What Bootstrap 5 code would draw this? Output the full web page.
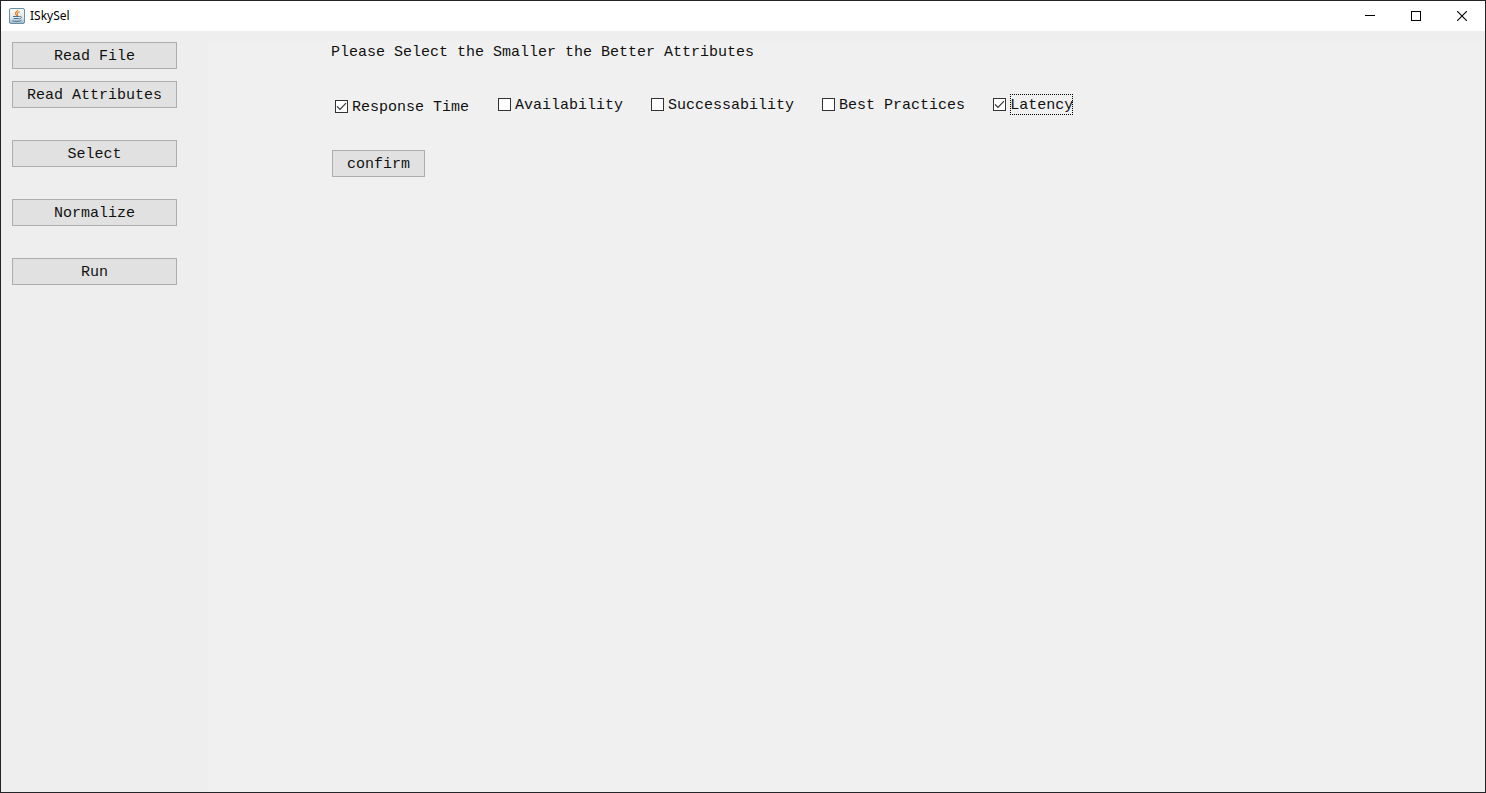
<!DOCTYPE html>
<html lang="en">
<head>
<meta charset="utf-8">
<meta name="viewport" content="width=device-width, initial-scale=1">
<title>ISkySel</title>
<link rel="stylesheet" href="https://cdn.jsdelivr.net/npm/bootstrap@5.3.0/dist/css/bootstrap.min.css">
<style>
  body { font-family: "Liberation Mono", monospace; font-size: 15px; line-height: 20px; color: #111; background: #eee; }
  .app-window { border: 1px solid #222428; }
  .title-bar { height: 30px; padding-left: 8px; font: 12px/30px "Noto Sans", sans-serif; color: #000; }
  .app-name { margin-left: 5px; }
  .caption-btn { width: 46px; height: 30px; }
  .side-panel { width: 207px; padding: 11px 31px 11px 11px; }
  .work-panel { margin-top: 10px; padding-left: 123px; background: #f0f0f0; }
  .swing-btn {
    --bs-btn-font-size: 15px; --bs-btn-line-height: 20px; --bs-btn-border-radius: 0;
    --bs-btn-color: #111; --bs-btn-bg: #e1e1e1; --bs-btn-border-color: #adadad;
    --bs-btn-hover-color: #111; --bs-btn-hover-bg: #e5f1fb; --bs-btn-hover-border-color: #0078d7;
    height: 27px; padding: 4px 13px 1px;
  }
  .step-gap { margin-top: 32px; }
  .pair-gap { margin-top: 12px; }
  .prompt-text { padding-top: 2px; }
  .options { gap: 10px 28px; margin: 29px 0 0 4px; }
  .option { gap: 4px; }
  .option label { padding-top: 2px; line-height: 19px; }
  .option.first-option { padding-top: 4px; margin-right: 1px; }
  .option .form-check-input {
    width: 13px; height: 13px; margin: 0; border: 1px solid #333; border-radius: 0; background-color: #fff;
  }
  .option .form-check-input:checked {
    background-color: #fff; background-size: 11px 11px;
    background-image: url("data:image/svg+xml,%3Csvg xmlns='http://www.w3.org/2000/svg' viewBox='0 0 11 11'%3E%3Cpath d='M1 5.3l3 3L10 2.2' fill='none' stroke='%23333' stroke-width='1.2'/%3E%3C/svg%3E");
  }
  .focused-text { outline: 1px dotted #000; outline-offset: -1px; }
  .confirm-row { padding: 33px 0 0 1px; }
  .confirm-row .swing-btn { padding-left: 14px; padding-right: 14px; }
</style>
</head>
<body>
<div class="app-window min-vh-100 d-flex flex-column">
  <header class="title-bar bg-white d-flex align-items-center">
    <svg width="16" height="16" viewBox="0 0 16 16" aria-hidden="true">
      <defs><linearGradient id="tile" x2="0" y2="1"><stop stop-color="#f8fafb"/><stop offset=".6" stop-color="#e1eaf0"/><stop offset="1" stop-color="#9db7c8"/></linearGradient></defs>
      <rect x=".5" y=".5" width="15" height="15" rx="1.5" fill="url(#tile)" stroke="#6d8da3"/>
      <path d="M8.7 1.8C9 3.6 5.4 4.2 6.5 6c.4.7 1 1.1 1.2 1.9M10.8 3.8C8.7 4.6 7.5 5.4 8.5 6.5c.4.5.2.9-.2 1.4" fill="none" stroke="#e68422" stroke-width="1.2"/>
      <path d="M4 8.5h6.5M4.7 10.5h5M10.5 8.5c2.9-.4 2.3 2-.2 2.3M3.5 12.8c2.8.7 6.2.6 8.8-.2" fill="none" stroke="#48738f"/>
    </svg>
    <span class="app-name">ISkySel</span>
    <div class="ms-auto d-flex">
      <button type="button" class="caption-btn btn rounded-0 border-0 p-0 d-flex align-items-center justify-content-center" aria-label="Minimize">
        <svg width="10" height="10" viewBox="0 0 10 10" shape-rendering="crispEdges"><path d="M0 4.5h10" stroke="#000"/></svg>
      </button>
      <button type="button" class="caption-btn btn rounded-0 border-0 p-0 d-flex align-items-center justify-content-center" aria-label="Maximize">
        <svg width="10" height="10" viewBox="0 0 10 10" shape-rendering="crispEdges"><path d="M.5.5h9v9h-9z" fill="none" stroke="#000"/></svg>
      </button>
      <button type="button" class="caption-btn btn rounded-0 border-0 p-0 d-flex align-items-center justify-content-center" aria-label="Close">
        <svg width="10" height="10" viewBox="0 0 10 10"><path d="M0 0l10 10M10 0L0 10" stroke="#000" stroke-width="1.1"/></svg>
      </button>
    </div>
  </header>
  <div class="d-flex flex-grow-1">
    <nav class="side-panel d-flex flex-column flex-shrink-0" aria-label="Steps">
      <button type="button" class="btn swing-btn">Read File</button>
      <button type="button" class="btn swing-btn pair-gap">Read Attributes</button>
      <button type="button" class="btn swing-btn step-gap">Select</button>
      <button type="button" class="btn swing-btn step-gap">Normalize</button>
      <button type="button" class="btn swing-btn step-gap">Run</button>
    </nav>
    <main class="work-panel flex-grow-1">
      <form>
        <p id="prompt" class="prompt-text mb-0">Please Select the Smaller the Better Attributes</p>
        <div class="options d-flex flex-wrap align-items-center" role="group" aria-labelledby="prompt">
          <div class="option first-option d-flex align-items-center">
            <input class="form-check-input" type="checkbox" id="response" checked>
            <label for="response">Response Time</label>
          </div>
          <div class="option d-flex align-items-center">
            <input class="form-check-input" type="checkbox" id="availability">
            <label for="availability">Availability</label>
          </div>
          <div class="option d-flex align-items-center">
            <input class="form-check-input" type="checkbox" id="success">
            <label for="success">Successability</label>
          </div>
          <div class="option d-flex align-items-center">
            <input class="form-check-input" type="checkbox" id="practices">
            <label for="practices">Best Practices</label>
          </div>
          <div class="option d-flex align-items-center">
            <input class="form-check-input" type="checkbox" id="latency" checked>
            <label for="latency" class="focused-text">Latency</label>
          </div>
        </div>
        <div class="confirm-row">
          <button type="button" class="btn swing-btn">confirm</button>
        </div>
      </form>
    </main>
  </div>
</div>
<script src="https://cdn.jsdelivr.net/npm/bootstrap@5.3.0/dist/js/bootstrap.bundle.min.js"></script>
</body>
</html>
